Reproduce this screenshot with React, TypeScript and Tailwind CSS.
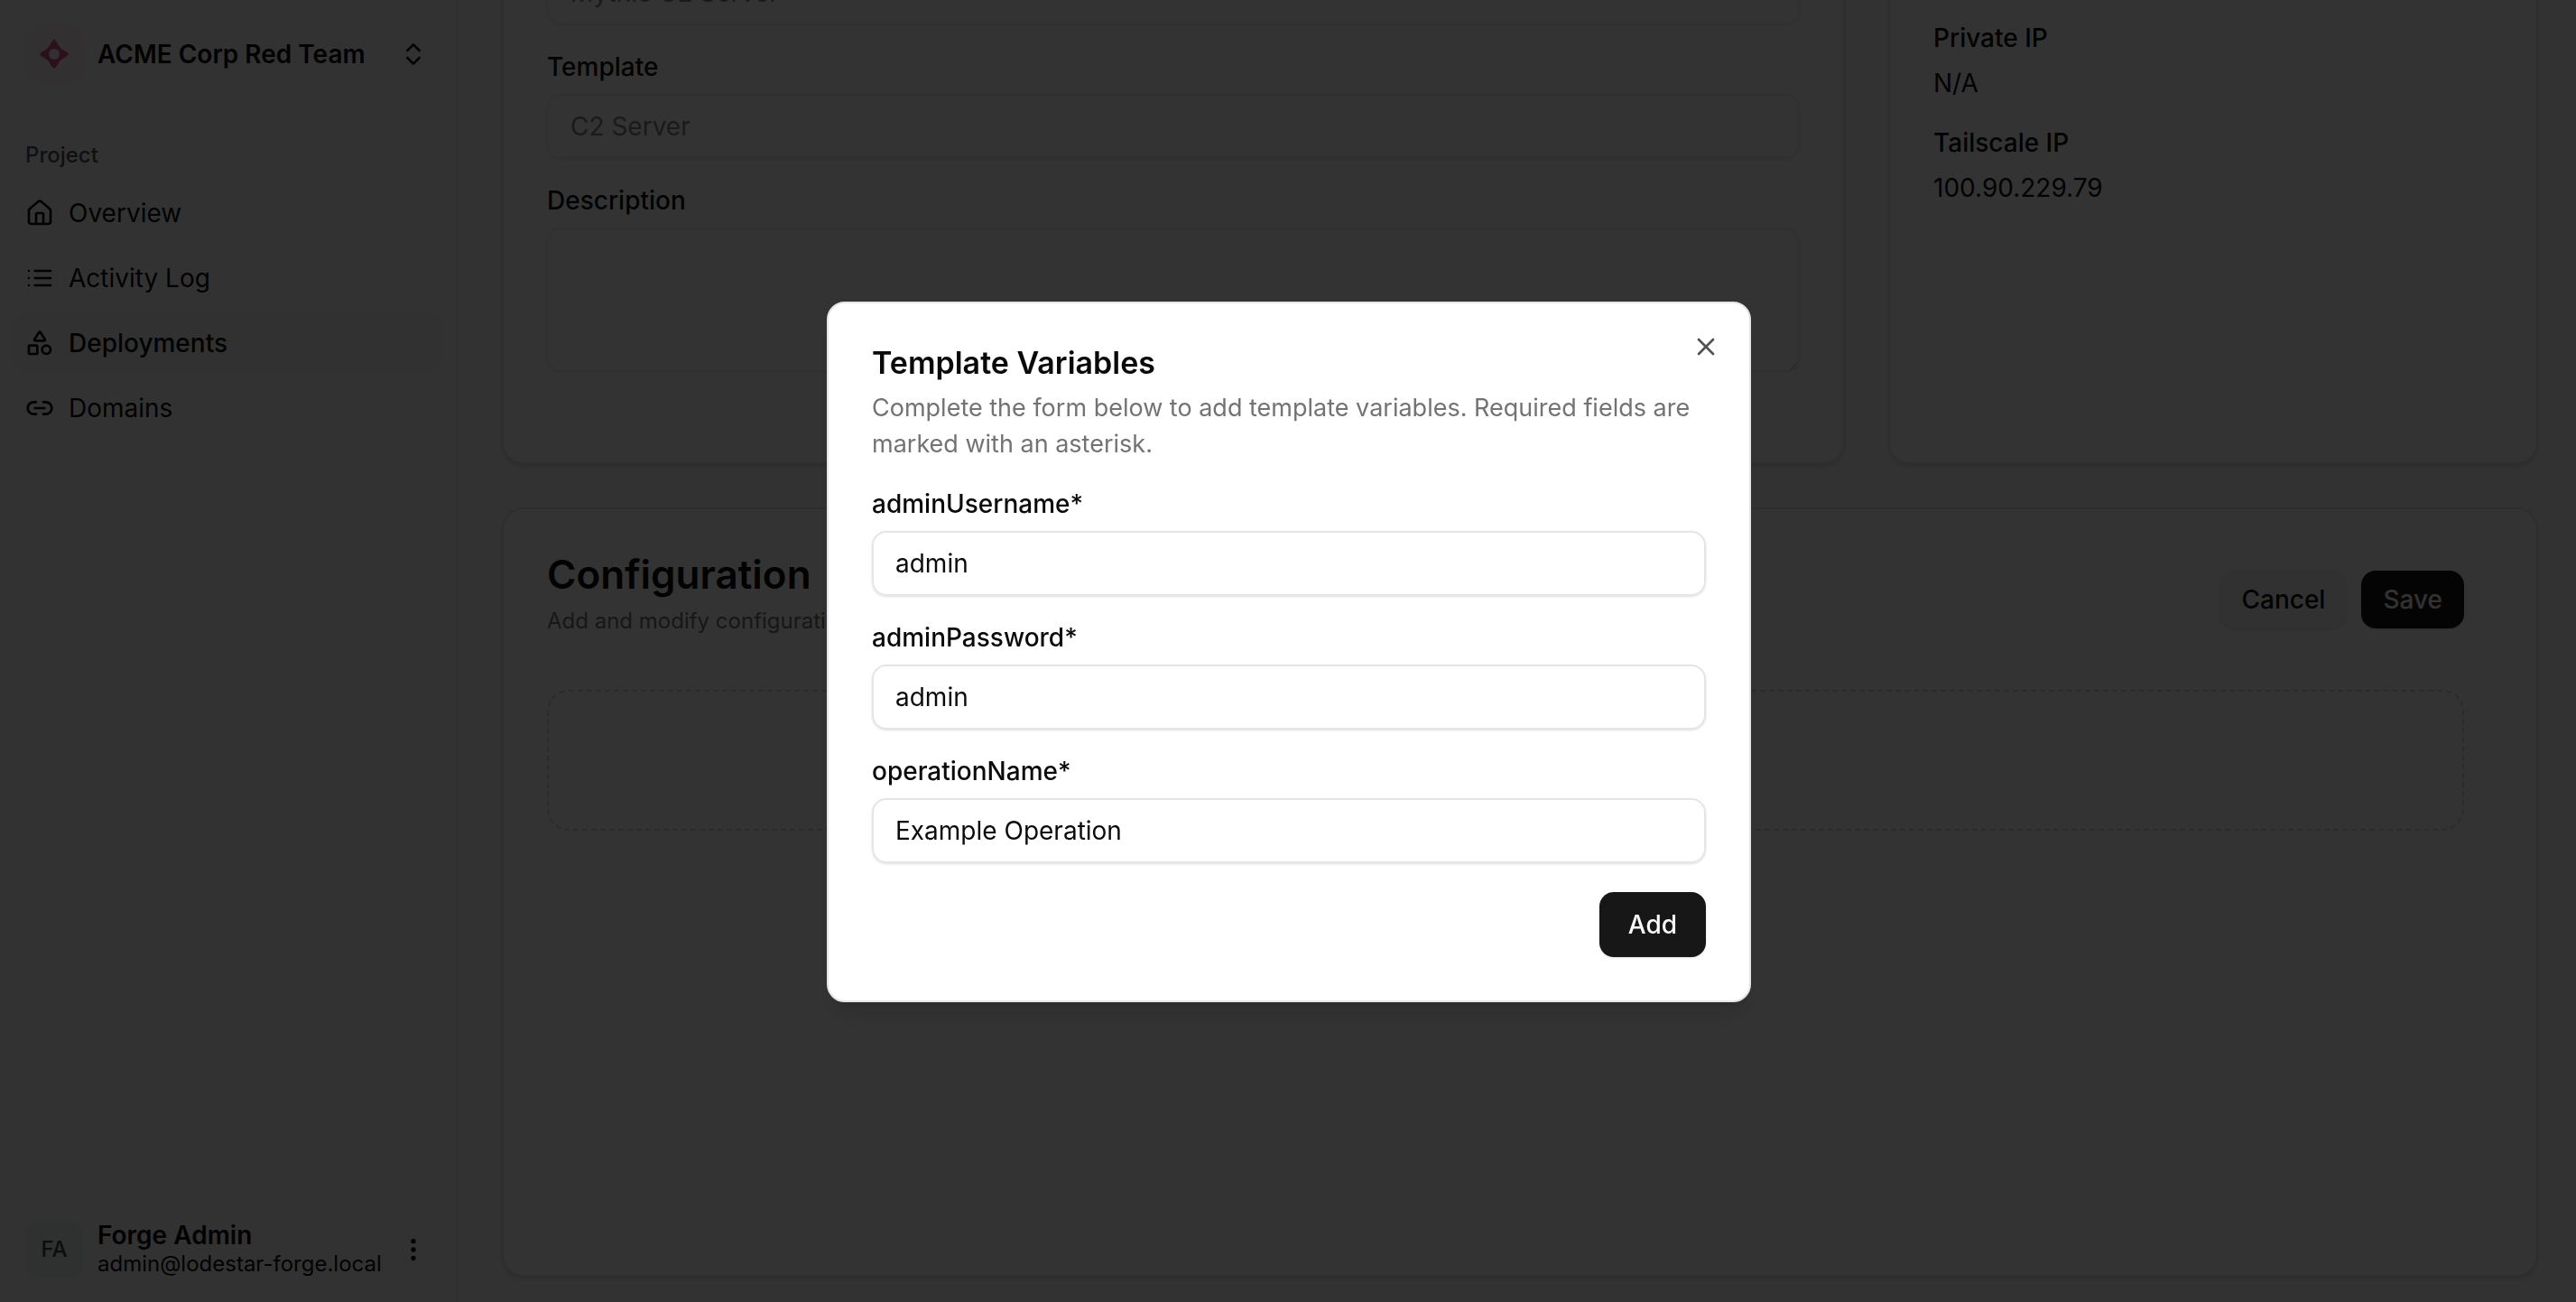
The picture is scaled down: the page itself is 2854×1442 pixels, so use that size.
import React from "react";
import { ChevronsUpDown, EllipsisVertical, House, Link2, Shapes, X } from "lucide-react";

function ListIcon({ className }: { className?: string }) {
  return (
    <svg className={className} viewBox="0 0 24 24" fill="none" stroke="currentColor" strokeWidth="2" strokeLinecap="round" strokeLinejoin="round" aria-hidden="true">
      <path d="M3 6h.01M3 12h.01M3 18h.01M8 6h13M8 12h13M8 18h13" />
    </svg>
  );
}

function LogoMark({ className }: { className?: string }) {
  return (
    <svg className={className} viewBox="0 0 32 32" aria-hidden="true">
      <path
        fill="currentColor"
        fillRule="evenodd"
        d="M14.2 1.2 Q16 -1 17.8 1.2 Q20 4.2 21.6 7.2 Q22.6 9.2 24.8 10.4 Q28 12.2 31 14.4 Q33 16 31 17.6 Q28 19.8 24.8 21.6 Q22.6 22.8 21.6 24.8 Q20 27.8 17.8 30.8 Q16 33 14.2 30.8 Q12 27.8 10.4 24.8 Q9.4 22.8 7.2 21.6 Q4 19.8 1 17.6 Q-1 16 1 14.4 Q4 12.2 7.2 10.4 Q9.4 9.2 10.4 7.2 Q12 4.2 14.2 1.2 Z M16 10 a6 6 0 1 0 0 12 a6 6 0 1 0 0 -12 Z"
      />
    </svg>
  );
}

const navItems = [
  { label: "Overview", icon: House, active: false },
  { label: "Activity Log", icon: ListIcon, active: false },
  { label: "Deployments", icon: Shapes, active: true },
  { label: "Domains", icon: Link2, active: false },
];

function Sidebar() {
  return (
    <aside className="flex w-[508px] shrink-0 flex-col border-r-2 border-neutral-200 bg-neutral-50 py-3 pr-4 pl-3">
      <button type="button" className="flex items-center gap-4 p-4 text-left">
        <span className="flex size-16 items-center justify-center rounded-2xl bg-[#f8eef1] text-[#d0558f]">
          <LogoMark className="size-8" />
        </span>
        <span className="flex-1 font-semibold">ACME Corp Red Team</span>
        <ChevronsUpDown className="size-8" />
      </button>
      <nav className="mt-10 flex flex-col gap-2" aria-label="Project">
        <h2 className="flex h-12 items-center px-4 text-[24px] font-medium text-neutral-600">Project</h2>
        {navItems.map(({ label, icon: Icon, active }) => (
          <a
            key={label}
            href="#"
            aria-current={active ? "page" : undefined}
            className={
              active
                ? "flex h-16 items-center gap-4 rounded-2xl bg-neutral-100 px-4 font-medium"
                : "flex h-16 items-center gap-4 rounded-2xl px-4"
            }
          >
            <Icon className="size-8" />
            {label}
          </a>
        ))}
      </nav>
      <button type="button" className="mt-auto flex items-center gap-4 px-4 py-3.5 text-left">
        <span className="flex size-16 items-center justify-center rounded-2xl bg-[#e6f2ee] text-[24px] font-medium text-neutral-700">FA</span>
        <span className="flex flex-1 flex-col">
          <span className="leading-8 font-semibold">Forge Admin</span>
          <span className="text-[24px] leading-8">admin@lodestar-forge.local</span>
        </span>
        <EllipsisVertical className="size-8" />
      </button>
    </aside>
  );
}

const cardClass = "rounded-3xl border-2 border-neutral-200 bg-white shadow-md";
const fieldClass = "w-full rounded-2xl border-2 border-neutral-200 bg-transparent px-6 shadow-sm outline-none";

function Deployment() {
  return (
    <main className="flex min-w-0 flex-1 flex-col justify-end gap-12 overflow-hidden bg-neutral-50 pr-[42px] pb-7 pl-12">
      <div className="grid grid-cols-3 gap-12">
        <form className={`${cardClass} col-span-2 flex flex-col gap-8 px-12 pt-12 pb-25`}>
          <input aria-label="Name" disabled defaultValue="Mythic C2 Server" className={`${fieldClass} h-18 opacity-50`} />
          <div className="flex flex-col gap-4">
            <label htmlFor="template" className="leading-7 font-medium">Template</label>
            <input id="template" disabled defaultValue="C2 Server" className={`${fieldClass} h-18 opacity-50`} />
          </div>
          <div className="flex flex-col gap-4">
            <label htmlFor="description" className="leading-7 font-medium">Description</label>
            <textarea id="description" disabled className={`${fieldClass} h-40 py-4 opacity-50`} />
          </div>
        </form>
        <dl className={`${cardClass} flex flex-col gap-8 px-12 pt-30`}>
          <div className="flex flex-col gap-4">
            <dt className="leading-7 font-medium">Private IP</dt>
            <dd className="leading-10">N/A</dd>
          </div>
          <div className="flex flex-col gap-4">
            <dt className="leading-7 font-medium">Tailscale IP</dt>
            <dd className="leading-10">100.90.229.79</dd>
          </div>
        </dl>
      </div>
      <section className={`${cardClass} flex min-h-[852px] shrink-0 flex-col gap-12 py-12 pr-20 pl-12`}>
        <header className="flex h-26 items-center justify-between">
          <div className="flex flex-col gap-2 self-start">
            <h1 className="text-[44px] leading-12 font-semibold">Configuration</h1>
            <p className="text-[24px] leading-10 text-neutral-500">Add and modify configuration files</p>
          </div>
          <div className="flex gap-4">
            <button type="button" className="h-16 rounded-2xl bg-neutral-100 px-6 font-medium shadow-sm">Cancel</button>
            <button type="button" className="h-16 rounded-2xl bg-neutral-900 px-6 font-medium text-neutral-50 shadow-sm">Save</button>
          </div>
        </header>
        <div className="h-39 rounded-3xl border-2 border-dashed border-neutral-300" />
      </section>
    </main>
  );
}

const variables = [
  { name: "adminUsername", value: "admin" },
  { name: "adminPassword", value: "admin" },
  { name: "operationName", value: "Example Operation" },
];

function TemplateVariablesDialog() {
  return (
    <div className="fixed inset-0 flex items-center justify-center bg-black/80 pt-0.5 pl-0.5">
      <div role="dialog" aria-modal="true" aria-labelledby="dialog-title" className="relative w-full max-w-[1024px] rounded-[20px] border-2 border-neutral-200 bg-white p-12 shadow-xl">
        <h2 id="dialog-title" className="text-[34px] leading-9 font-semibold">Template Variables</h2>
        <p className="mt-3 text-[27px] leading-10 text-neutral-500">
          Complete the form below to add template variables. Required fields are marked with an asterisk.
        </p>
        <form className="mt-8 flex flex-col gap-8">
          {variables.map(({ name, value }) => (
            <div key={name} className="flex flex-col gap-4">
              <label htmlFor={name} className="leading-7 font-medium">{name}*</label>
              <input id={name} defaultValue={value} className={`${fieldClass} h-18`} />
            </div>
          ))}
          <button type="button" className="h-18 self-end rounded-2xl bg-neutral-900 px-8 font-medium text-neutral-50 shadow-sm">Add</button>
        </form>
        <button type="button" aria-label="Close" className="absolute top-8 right-8 opacity-70">
          <X className="size-8" />
        </button>
      </div>
    </div>
  );
}

export default function App() {
  return (
    <div className="flex h-screen overflow-hidden font-['Inter',sans-serif] text-[28px] leading-10 text-neutral-950">
      <Sidebar />
      <Deployment />
      <TemplateVariablesDialog />
    </div>
  );
}
